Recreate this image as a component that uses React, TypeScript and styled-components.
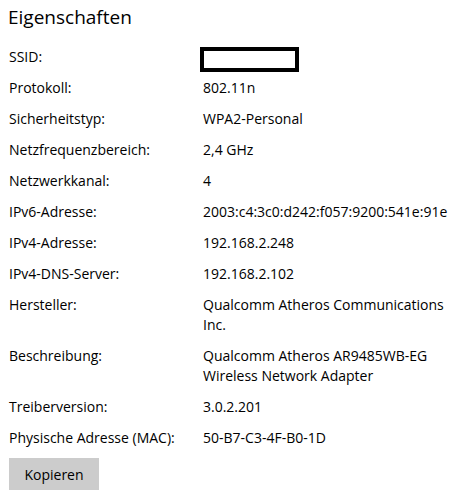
import React from 'react';
import styled, {createGlobalStyle} from 'styled-components';

const GlobalStyle = createGlobalStyle`
	html, body {
		margin: 0;
		padding: 0;
		background: #ffffff;
	}
	body {
		font-family: 'Open Sans', 'Noto Sans', 'Liberation Sans', sans-serif;
		color: #000000;
	}
`;

interface Property {
	label: string;
	value: string;
	redacted?: boolean;
}

const properties: Property[] = [
	{label: 'SSID:', value: '', redacted: true},
	{label: 'Protokoll:', value: '802.11n'},
	{label: 'Sicherheitstyp:', value: 'WPA2-Personal'},
	{label: 'Netzfrequenzbereich:', value: '2,4 GHz'},
	{label: 'Netzwerkkanal:', value: '4'},
	{label: 'IPv6-Adresse:', value: '2003:c4:3c0:d242:f057:9200:541e:91e'},
	{label: 'IPv4-Adresse:', value: '192.168.2.248'},
	{label: 'IPv4-DNS-Server:', value: '192.168.2.102'},
	{label: 'Hersteller:', value: 'Qualcomm Atheros Communications Inc.'},
	{label: 'Beschreibung:', value: 'Qualcomm Atheros AR9485WB-EG Wireless Network Adapter'},
	{label: 'Treiberversion:', value: '3.0.2.201'},
	{label: 'Physische Adresse (MAC):', value: '50-B7-C3-4F-B0-1D'},
];

const App: React.FC = () => {
	return (
		<Page>
			<GlobalStyle />
			<Title>Eigenschaften</Title>
			<PropertyList>
				{properties.map((p) => (
					<React.Fragment key={p.label}>
						<Label>{p.label}</Label>
						<Value>
							{p.value}
							{p.redacted && <Redaction />}
						</Value>
					</React.Fragment>
				))}
			</PropertyList>
			<CopyButton>Kopieren</CopyButton>
		</Page>
	);
};

export default App;

const Page = styled.div`
	width: 451px;
	height: 498px;
	box-sizing: border-box;
	padding: 3px 0 0 9px;
	overflow: hidden;
`;

const Title = styled.h2`
	margin: 0 0 0 -1px;
	font-size: 19px;
	font-weight: 400;
	line-height: 28px;
`;

const PropertyList = styled.div`
	display: grid;
	grid-template-columns: 194px 246px;
	row-gap: 11px;
	margin-top: 16px;
	font-size: 14px;
	line-height: 20px;
`;

const Label = styled.div`
	white-space: nowrap;
`;

const Value = styled.div`
	position: relative;
	min-height: 20px;
`;

// black-bordered box hiding the SSID
const Redaction = styled.div`
	position: absolute;
	left: -3px;
	top: 0;
	width: 99px;
	height: 25px;
	box-sizing: border-box;
	border: 4px solid #000000;
	background: #ffffff;
`;

const CopyButton = styled.button`
	display: block;
	margin-top: 10px;
	width: 90px;
	height: 32px;
	padding: 0;
	border: none;
	background: #cccccc;
	color: #000000;
	font-family: inherit;
	font-size: 14px;
`;
